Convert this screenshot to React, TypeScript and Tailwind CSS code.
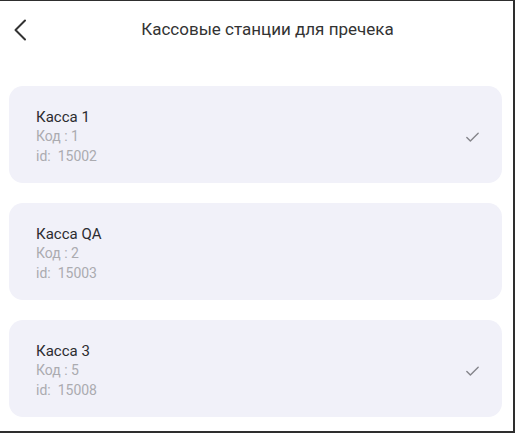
import { Check } from "lucide-react"

type Station = {
	name: string
	code: number
	id: number
	selected: boolean
}

const stations: Station[] = [
	{ name: "Касса 1", code: 1, id: 15002, selected: true },
	{ name: "Касса QA", code: 2, id: 15003, selected: false },
	{ name: "Касса 3", code: 5, id: 15008, selected: true },
]

const StationCard = ({ station }: { station: Station }) => {
	return (
		<div className="flex items-center justify-between h-[97px] rounded-[14px] bg-[#f1f1f9] pl-[27px] pr-[21px] pt-[5px]">
			<div className="flex flex-col">
				<span className="text-[15px] leading-[19px] text-[#2c2c30]">{station.name}</span>
				<span className="text-[14px] leading-[19px] text-[#ababb0]">Код : {station.code}</span>
				<span className="text-[14px] leading-[20px] text-[#ababb0]">id:&nbsp; {station.id}</span>
			</div>
			{station.selected && <Check size={17} strokeWidth={2} className="text-[#85858b]" />}
		</div>
	)
}

export default function App() {
	return (
		<div
			className="w-[515px] h-[433px] bg-white border-t border-r-2 border-b-2 border-[#2e2e2e] overflow-hidden"
			style={{ fontFamily: "Roboto, 'Noto Sans', sans-serif" }}
		>
			<div className="relative flex items-center justify-center h-[58px] pl-[22px]">
				<svg width="14" height="22" viewBox="0 0 14 22" fill="none" className="absolute left-[13px] top-[18px]">
					<path d="M12 1.5 L2.5 11 L12 20.5" stroke="#333" strokeWidth="2" strokeLinecap="round" strokeLinejoin="round" />
				</svg>
				<h1 className="text-[17px] font-normal text-[#333]">Кассовые станции для пречека</h1>
			</div>
			<div className="flex flex-col gap-[20px] pl-[9px] pr-[11px] pt-[27px]">
				{stations.map((s) => (
					<StationCard key={s.id} station={s} />
				))}
			</div>
		</div>
	)
}
